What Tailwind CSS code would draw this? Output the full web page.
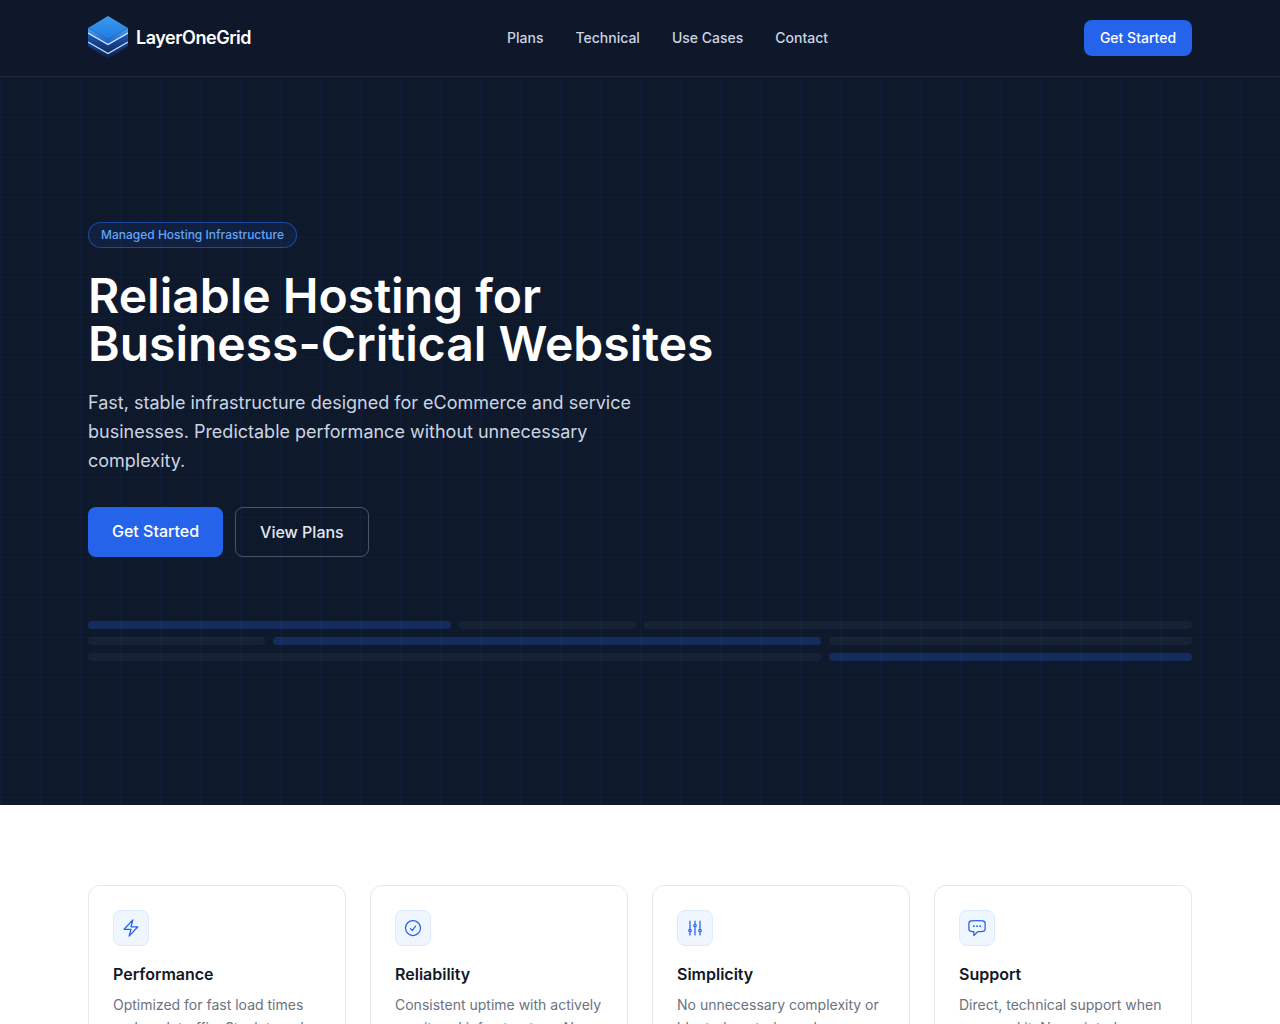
<!DOCTYPE html>
<html lang="en">
<head>
    <meta charset="UTF-8">
    <meta name="viewport" content="width=device-width, initial-scale=1.0">
    <title>LayerOneGrid</title>
    <script src="https://cdn.jsdelivr.net/npm/@tailwindcss/browser@4"></script>
</head>
<body class="bg-white font-['Inter',sans-serif] text-[#111827]">
    <header class="h-[77px] bg-[#0f172a] border-b border-[#1e293b] px-[88px] flex items-center justify-between">
        <a href="#" class="flex items-center gap-2">
            <svg width="40" height="44" viewBox="0 0 40 44" class="shrink-0">
                <defs>
                    <linearGradient id="logoTop" x1="0" y1="0" x2="0" y2="1">
                        <stop offset="0" stop-color="#3a9bf0"/>
                        <stop offset="1" stop-color="#1f7be0"/>
                    </linearGradient>
                    <linearGradient id="logoMid" x1="0" y1="0" x2="0" y2="1">
                        <stop offset="0" stop-color="#4aa3f0"/>
                        <stop offset="1" stop-color="#1a5cc0"/>
                    </linearGradient>
                    <linearGradient id="logoLow" x1="0" y1="0" x2="0" y2="1">
                        <stop offset="0" stop-color="#1d5cc0"/>
                        <stop offset="1" stop-color="#0c1c42"/>
                    </linearGradient>
                </defs>
                <path d="M0 17 L20 28.500 L40 17 V30 L20 43 L0 30 Z" fill="url(#logoLow)"/>
                <path d="M0 12 L20 23.500 L40 12 V17 L20 28.500 L0 17 Z" fill="url(#logoMid)"/>
                <path d="M20 0 L40 12 L20 23.500 L0 12 Z" fill="url(#logoTop)"/>
                <path d="M0 17 L20 28.500 L40 17" fill="none" stroke="#e0f0ff" stroke-width="1.200"/>
                <path d="M0 26 L20 37.500 L40 26" fill="none" stroke="#c4dffc" stroke-width="1.200"/>
            </svg>
            <span class="text-lg font-semibold tracking-tight text-white">LayerOneGrid</span>
        </a>
        <nav class="flex items-center gap-8 text-sm font-medium text-[#cbd5e1]">
            <a href="#">Plans</a>
            <a href="#">Technical</a>
            <a href="#">Use Cases</a>
            <a href="#">Contact</a>
        </nav>
        <a href="#" class="h-9 w-[108px] flex items-center justify-center rounded-lg bg-[#2563eb] text-sm font-medium text-white">Get Started</a>
    </header>

    <section class="bg-[#0f192c] px-[88px] py-36 bg-[linear-gradient(to_right,rgba(37,99,235,0.07)_1px,transparent_1px),linear-gradient(to_bottom,rgba(37,99,235,0.05)_1px,transparent_1px)] bg-[size:40px_40px]">
        <span class="inline-flex h-[26px] items-center rounded-full border border-[#2563eb]/60 bg-[#2563eb]/10 px-3 text-xs font-medium text-[#60a5fa]">Managed Hosting Infrastructure</span>
        <h1 class="mt-6 text-5xl leading-[48px] font-semibold text-white">Reliable Hosting for<br>Business-Critical Websites</h1>
        <p class="mt-5 max-w-xl text-lg leading-[29px] text-[#cbd5e1]">Fast, stable infrastructure designed for eCommerce and service businesses. Predictable performance without unnecessary complexity.</p>
        <div class="mt-8 flex gap-3">
            <a href="#" class="px-6 py-3 rounded-lg bg-[#2563eb] font-medium text-white">Get Started</a>
            <a href="#" class="px-6 py-3 rounded-lg border border-[#475569] font-medium text-[#e2e8f0]">View Plans</a>
        </div>
        <div class="mt-16 grid grid-cols-12 gap-2">
            <div class="col-span-4 h-2 rounded-full bg-[#2563eb]/25"></div>
            <div class="col-span-2 h-2 rounded-full bg-[#334155]/25"></div>
            <div class="col-span-6 h-2 rounded-full bg-[#334155]/25"></div>
            <div class="col-span-2 h-2 rounded-full bg-[#334155]/25"></div>
            <div class="col-span-6 h-2 rounded-full bg-[#2563eb]/25"></div>
            <div class="col-span-4 h-2 rounded-full bg-[#334155]/25"></div>
            <div class="col-span-8 h-2 rounded-full bg-[#334155]/25"></div>
            <div class="col-span-4 h-2 rounded-full bg-[#2563eb]/25"></div>
        </div>
    </section>

    <section class="px-[88px] py-20">
        <div class="grid grid-cols-4 gap-6">
            <div class="rounded-xl border border-[#e5e7eb] p-6">
                <div class="size-9 flex items-center justify-center rounded-lg border border-[#dbeafe] bg-[#eff6ff]">
                    <svg class="size-5 text-[#2563eb]" fill="none" viewBox="0 0 24 24" stroke="currentColor" stroke-width="1.5" stroke-linecap="round" stroke-linejoin="round"><path d="M3.750 13.500l10.500-11.250L12 10.500h8.250L9.750 21.750 12 13.500H3.750z"/></svg>
                </div>
                <h3 class="mt-4 font-semibold">Performance</h3>
                <p class="mt-2 text-sm leading-relaxed text-[#6b7280]">Optimized for fast load times and peak traffic. Stack tuned</p>
            </div>
            <div class="rounded-xl border border-[#e5e7eb] p-6">
                <div class="size-9 flex items-center justify-center rounded-lg border border-[#dbeafe] bg-[#eff6ff]">
                    <svg class="size-5 text-[#2563eb]" fill="none" viewBox="0 0 24 24" stroke="currentColor" stroke-width="1.5" stroke-linecap="round" stroke-linejoin="round"><path d="M9 12.750L11.250 15 15 9.750M21 12a9 9 0 11-18 0 9 9 0 0118 0z"/></svg>
                </div>
                <h3 class="mt-4 font-semibold">Reliability</h3>
                <p class="mt-2 text-sm leading-relaxed text-[#6b7280]">Consistent uptime with actively monitored infrastructure. No</p>
            </div>
            <div class="rounded-xl border border-[#e5e7eb] p-6">
                <div class="size-9 flex items-center justify-center rounded-lg border border-[#dbeafe] bg-[#eff6ff]">
                    <svg class="size-5 text-[#2563eb]" fill="none" viewBox="0 0 24 24" stroke="currentColor" stroke-width="1.5" stroke-linecap="round" stroke-linejoin="round"><path d="M6 13.500V3.750m0 9.750a1.500 1.500 0 010 3m0-3a1.500 1.500 0 000 3m0 3.750V16.500m12-3V3.750m0 9.750a1.500 1.500 0 010 3m0-3a1.500 1.500 0 000 3m0 3.750V16.500m-6-9V3.750m0 3.750a1.500 1.500 0 010 3m0-3a1.500 1.500 0 000 3m0 9.750V10.500"/></svg>
                </div>
                <h3 class="mt-4 font-semibold">Simplicity</h3>
                <p class="mt-2 text-sm leading-relaxed text-[#6b7280]">No unnecessary complexity or bloated control panels.</p>
            </div>
            <div class="rounded-xl border border-[#e5e7eb] p-6">
                <div class="size-9 flex items-center justify-center rounded-lg border border-[#dbeafe] bg-[#eff6ff]">
                    <svg class="size-5 text-[#2563eb]" fill="none" viewBox="0 0 24 24" stroke="currentColor" stroke-width="1.5" stroke-linecap="round" stroke-linejoin="round"><path d="M8.625 9.750a.375.375 0 11-.75 0 .375.375 0 01.75 0zm0 0H8.250m4.125 0a.375.375 0 11-.75 0 .375.375 0 01.75 0zm0 0H12m4.125 0a.375.375 0 11-.75 0 .375.375 0 01.75 0zm0 0h-.375m-13.500 3.010c0 1.600 1.123 2.994 2.707 3.227 1.087.16 2.185.283 3.293.369V21l4.184-4.183a1.140 1.140 0 01.778-.332 48.294 48.294 0 005.830-.498c1.585-.233 2.708-1.626 2.708-3.228V6.741c0-1.602-1.123-2.995-2.707-3.228A48.394 48.394 0 0012 3c-2.392 0-4.744.175-7.043.513C3.373 3.746 2.250 5.140 2.250 6.741v6.018z"/></svg>
                </div>
                <h3 class="mt-4 font-semibold">Support</h3>
                <p class="mt-2 text-sm leading-relaxed text-[#6b7280]">Direct, technical support when you need it. No scripted</p>
            </div>
        </div>
    </section>
</body>
</html>
